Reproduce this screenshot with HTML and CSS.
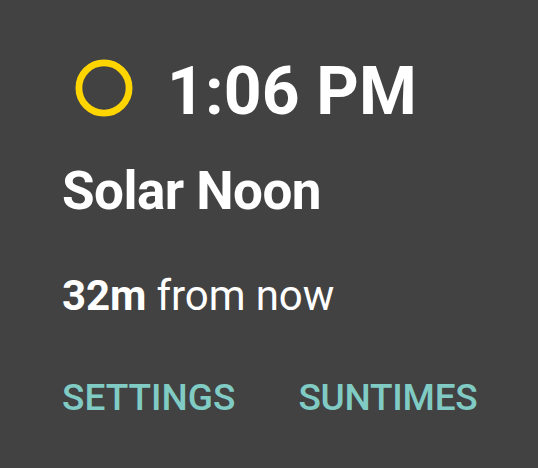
FILE: index.html
```html
<!DOCTYPE html>
<html lang="en">
<head>
<meta charset="utf-8">
<title>Solar Noon</title>
<link rel="stylesheet" href="styles.css">
</head>
<body>
<main class="dialog">
  <header class="event">
    <svg class="icon" viewBox="0 0 58 58"><circle cx="29" cy="29" r="25.1" fill="none" stroke="#ffd500" stroke-width="6.8"/></svg>
    <h1 class="time">1:06 PM</h1>
  </header>
  <h2 class="title">Solar Noon</h2>
  <p class="note"><strong>32m</strong> from now</p>
  <footer class="actions">
    <button class="action">SETTINGS</button>
    <button class="action action-open">SUNTIMES</button>
  </footer>
</main>
</body>
</html>
```
FILE: styles.css
```css
* { box-sizing: border-box; margin: 0; padding: 0; }
body { background: #424242; font-family: Roboto, sans-serif; color: #fff; }
.dialog { height: 468px; padding: 52px 60.5px 0 62px; overflow: hidden; white-space: nowrap; }
.event { display: flex; align-items: center; height: 80px; }
.icon { width: 58px; height: 58px; margin: -8px 34px 0 13px; flex: none; }
.time { font-size: 66px; line-height: 80px; font-weight: 700; letter-spacing: 0.15px; }
.title { margin-top: 28px; font-size: 53px; line-height: 62px; font-weight: 700; letter-spacing: -0.55px; }
.note { margin-top: 49px; font-size: 42px; line-height: 50px; letter-spacing: -0.1px; }
.note strong { font-weight: 700; }
.actions { display: flex; justify-content: space-between; margin-top: 55px; }
.action { border: 0; background: none; font: 500 37px/44px Roboto, sans-serif; color: #80cbc4; }
.action-open { letter-spacing: -0.25px; }
```
